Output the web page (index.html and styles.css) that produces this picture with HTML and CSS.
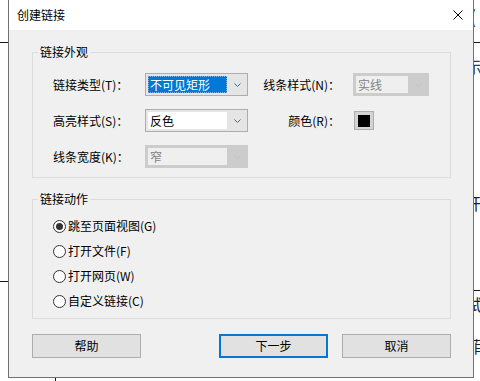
FILE: index.html
```html
<!DOCTYPE html>
<html lang="zh-CN">
<head>
<meta charset="utf-8">
<title>创建链接</title>
<link rel="stylesheet" href="styles.css">
</head>
<body>
<div class="doc">
  <span class="rule rule-l1"></span>
  <span class="rule rule-l2"></span>
  <span class="rule rule-r1"></span>
  <span class="rule rule-r2"></span>
  <span class="vrule"></span>
  <span class="frag frag-paren">(</span>
  <span class="frag frag-1">示</span>
  <span class="frag frag-blue">：</span>
  <span class="frag frag-2">开</span>
  <span class="frag frag-3">试</span>
  <span class="frag frag-4">菲</span>
</div>

<div class="dialog">
  <div class="titlebar">
    <span class="title">创建链接</span>
    <svg class="close" width="10" height="10" viewBox="0 0 10 10"><path d="M0.5 0.5 L9.5 9.5 M9.5 0.5 L0.5 9.5" stroke="#000" stroke-width="1" fill="none"/></svg>
  </div>
  <div class="body">
    <fieldset class="group">
      <legend>链接外观</legend>
      <div class="grid">
        <span class="lbl">链接类型(T)：</span>
        <div class="combo">
          <span class="field field-sel"><span class="focus">不可见矩形</span></span>
          <span class="arrow"><svg width="7" height="4" viewBox="0 0 7 4"><path d="M0.5 0.5 L3.5 3.5 L6.5 0.5" stroke="#606060" fill="none"/></svg></span>
        </div>
        <span class="lbl lbl-r">线条样式(N)：</span>
        <div class="combo combo-dis">
          <span class="field">实线</span>
          <span class="arrow"><svg width="7" height="4" viewBox="0 0 7 4"><path d="M0.5 0.5 L3.5 3.5 L6.5 0.5" stroke="#bfbfbf" fill="none"/></svg></span>
        </div>

        <span class="lbl">高亮样式(S)：</span>
        <div class="combo">
          <span class="field">反色</span>
          <span class="arrow"><svg width="7" height="4" viewBox="0 0 7 4"><path d="M0.5 0.5 L3.5 3.5 L6.5 0.5" stroke="#606060" fill="none"/></svg></span>
        </div>
        <span class="lbl lbl-r">颜色(R)：</span>
        <div class="swatch-cell"><span class="swatch"><span class="swatch-color"></span></span></div>

        <span class="lbl">线条宽度(K)：</span>
        <div class="combo combo-dis">
          <span class="field">窄</span>
          <span class="arrow"><svg width="7" height="4" viewBox="0 0 7 4"><path d="M0.5 0.5 L3.5 3.5 L6.5 0.5" stroke="#bfbfbf" fill="none"/></svg></span>
        </div>
      </div>
    </fieldset>

    <fieldset class="group group-2">
      <legend>链接动作</legend>
      <div class="radios">
        <label class="radio"><span class="dot checked"></span>跳至页面视图(G)</label>
        <label class="radio"><span class="dot"></span>打开文件(F)</label>
        <label class="radio"><span class="dot"></span>打开网页(W)</label>
        <label class="radio"><span class="dot"></span>自定义链接(C)</label>
      </div>
    </fieldset>

    <div class="buttons">
      <button class="btn">帮助</button>
      <div class="btn-right">
        <button class="btn btn-default">下一步</button>
        <button class="btn">取消</button>
      </div>
    </div>
  </div>
</div>
</body>
</html>
```

FILE: styles.css
```css
html, body {
  margin: 0;
  padding: 0;
}
body {
  width: 480px;
  height: 381px;
  background: #ffffff;
  position: relative;
  overflow: hidden;
  font-family: "Noto Sans CJK SC", "Noto Sans", sans-serif;
  font-size: 12px;
  color: #000;
}

/* underlying document fragments */
.doc {
  position: absolute;
  inset: 0;
}
.rule {
  position: absolute;
  height: 1px;
  background: #1a1a1a;
}
.rule-l1 { left: 0; top: 42px; width: 10px; }
.rule-l2 { left: 0; top: 281px; width: 10px; }
.rule-r1 { left: 470px; top: 42px; width: 10px; }
.rule-r2 { left: 470px; top: 290px; width: 10px; }
.vrule {
  position: absolute;
  left: 55px;
  top: 372px;
  width: 1px;
  height: 9px;
  background: #1a1a1a;
}
.frag {
  position: absolute;
  font-size: 16px;
  line-height: 16px;
  color: #222;
}
.frag-paren { left: 470px; top: 8px; color: #1f3d7a; font-size: 18px; }
.frag-1 { left: 466px; top: 58px; color: #2a3a55; }
.frag-blue { left: 466px; top: 152px; color: #3b5fa8; }
.frag-2 { left: 465px; top: 195px; }
.frag-3 { left: 466px; top: 296px; }
.frag-4 { left: 466px; top: 338px; }

/* dialog */
.dialog {
  position: absolute;
  left: 8px;
  top: 0;
  width: 466px;
  height: 378px;
  box-sizing: border-box;
  border: 1px solid #707070;
  border-top: none;
  background: #f0f0f0;
  z-index: 2;
  display: flex;
  flex-direction: column;
}
.titlebar {
  height: 30px;
  background: #ffffff;
  display: flex;
  align-items: center;
  justify-content: space-between;
  padding: 0 10px 0 8px;
  flex: none;
}
.title {
  font-size: 12px;
  line-height: 16px;
}
.close { display: block; }

.body {
  padding: 14px 22px 0 23px;
}

.group {
  margin: 0;
  padding: 0;
  border: 1px solid #dcdcdc;
  min-width: 0;
}
.group legend {
  margin-left: 5px;
  padding: 0 2px;
  line-height: 16px;
  font-size: 12px;
}
.group-2 {
  margin-top: 13px;
}

.grid {
  display: grid;
  grid-template-columns: 92px 103px 105px 76px;
  grid-auto-rows: 23px;
  row-gap: 13px;
  align-items: center;
  padding: 13px 0 9px 20px;
}
.lbl {
  line-height: 16px;
  white-space: nowrap;
}
.lbl-r {
  text-align: right;
  padding-right: 13px;
}

.combo {
  box-sizing: border-box;
  height: 23px;
  border: 1px solid #adadad;
  background: #e5e5e5;
  display: flex;
  padding: 2px 0 2px 2px;
}
.field {
  flex: 1;
  background: #ffffff;
  line-height: 17px;
  padding-left: 2px;
  white-space: nowrap;
  overflow: hidden;
}
.field-sel {
  background: #0078d7;
  color: #ffffff;
  padding-left: 0;
}
.focus {
  display: block;
  height: 17px;
  box-sizing: border-box;
  border: 1px dotted #7fb2e5;
  padding-left: 1px;
  line-height: 15px;
}
.arrow {
  width: 20px;
  flex: none;
  display: flex;
  align-items: center;
  justify-content: center;
}
.arrow svg { display: block; }
.combo-dis {
  border-color: #cccccc;
  background: #cccccc;
}
.combo-dis .field {
  background: #efefef;
  color: #838383;
}

.swatch-cell {
  display: flex;
  align-items: center;
  padding-left: 1px;
}
.swatch {
  box-sizing: border-box;
  width: 20px;
  height: 19px;
  border: 1px solid #adadad;
  background: #d4d4d4;
  display: flex;
  align-items: center;
  justify-content: center;
}
.swatch-color {
  width: 12px;
  height: 12px;
  background: #000;
}

.radios {
  display: flex;
  flex-direction: column;
  gap: 9px;
  padding: 11px 0 9px 20px;
}
.radio {
  display: flex;
  align-items: center;
  gap: 2px;
  line-height: 16px;
  white-space: nowrap;
}
.dot {
  box-sizing: border-box;
  width: 13px;
  height: 13px;
  border: 1px solid #333333;
  border-radius: 50%;
  background: #ffffff;
  display: flex;
  align-items: center;
  justify-content: center;
}
.dot.checked::after {
  content: "";
  width: 7px;
  height: 7px;
  border-radius: 50%;
  background: #333333;
}

.buttons {
  margin-top: 15px;
  display: flex;
  justify-content: space-between;
}
.btn-right {
  display: flex;
  gap: 14px;
}
.btn {
  box-sizing: border-box;
  width: 109px;
  height: 24px;
  border: 1px solid #adadad;
  background: #e1e1e1;
  font-family: inherit;
  font-size: 12px;
  color: #000;
  padding: 0;
  margin: 0;
  line-height: 16px;
}
.btn-default {
  border: 2px solid #0078d7;
}
```
